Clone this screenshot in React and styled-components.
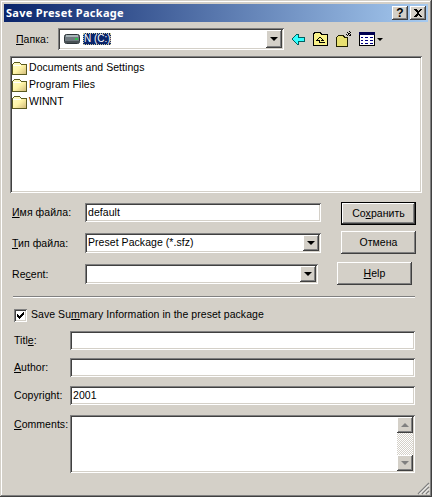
import React from "react";
import styled, { createGlobalStyle, css } from "styled-components";

const Global = createGlobalStyle`
  html, body { margin: 0; padding: 0; background: #d4d0c8; }
  * { box-sizing: border-box; }
`;

const sunken = css`
  background: #fff;
  box-shadow: inset 1px 1px 0 #808080, inset -1px -1px 0 #fff, inset 2px 2px 0 #404040, inset -2px -2px 0 #d4d0c8;
`;
const raised = css`
  background: #d4d0c8;
  box-shadow: inset -1px -1px 0 #404040, inset 1px 1px 0 #fff, inset -2px -2px 0 #808080;
`;

const Window = styled.div`
  position: relative;
  width: 432px;
  height: 497px;
  padding: 4px;
  background: #d4d0c8;
  box-shadow: inset -1px -1px 0 #404040, inset 1px 1px 0 #d4d0c8, inset -2px -2px 0 #808080, inset 2px 2px 0 #fff;
  font: 10.5px/13px "Liberation Sans", Arial, sans-serif;
  letter-spacing: 0.05px;
  color: #000;
  overflow: hidden;
`;
const TitleBar = styled.div`
  height: 18px;
  display: flex;
  align-items: center;
  padding: 0 2px;
  background: linear-gradient(to right, #0a246a, #a6caf0);
`;
const TitleText = styled.span`
  flex: 1;
  font: bold 11px/14px "Noto Sans", sans-serif;
  letter-spacing: 0.3px;
  color: #fff;
`;
const CaptionButton = styled.button`
  ${raised}
  width: 16px;
  height: 14px;
  margin: 0 0 0 2px;
  padding: 0;
  border: 0;
  display: flex;
  align-items: center;
  justify-content: center;
  font: bold 12px/12px "Liberation Sans", sans-serif;
  color: #000;
`;
const FolderRow = styled.div`
  display: flex;
  align-items: center;
  height: 22px;
  margin-top: 6px;
  padding-left: 12px;
`;
const FolderLabel = styled.span`
  width: 42px;
`;
const FolderCombo = styled.div`
  ${sunken}
  position: relative;
  width: 226px;
  height: 22px;
  display: flex;
  align-items: center;
  padding-left: 6px;
  gap: 3px;
`;
const Selected = styled.span`
  height: 12px;
  width: 28px;
  padding-left: 1px;
  font-size: 10px;
  line-height: 12px;
  letter-spacing: 0;
  background: #0a246a;
  color: #fff;
  outline: 1px dotted #c8c8a0;
  outline-offset: -1px;
  white-space: nowrap;
`;
const ComboButton = styled.span`
  ${raised}
  position: absolute;
  top: 2px;
  right: ${(p) => p.$right ?? 2}px;
  width: ${(p) => p.$w ?? 16}px;
  height: ${(p) => p.$h ?? 16}px;
  display: flex;
  align-items: center;
  justify-content: center;
  &::after {
    content: "";
    border-left: 4px solid transparent;
    border-right: 4px solid transparent;
    border-top: 4px solid #000;
  }
`;
const Toolbar = styled.div`
  display: flex;
  align-items: center;
  gap: 7px;
  margin-left: 7px;
`;
const MenuCaret = styled.span`
  width: 0;
  height: 0;
  margin-left: -5px;
  border-left: 3px solid transparent;
  border-right: 3px solid transparent;
  border-top: 3px solid #000;
`;
const FileList = styled.div`
  ${sunken}
  height: 137px;
  margin: 6px 6px 0;
  padding: 3px 2px;
`;
const FileRow = styled.div`
  height: 17px;
  display: flex;
  align-items: center;
  gap: 1px;
`;
const FileArea = styled.div`
  display: flex;
  margin-top: 9px;
  padding-left: 8px;
`;
const FileFields = styled.div`
  display: flex;
  flex-direction: column;
  gap: 11px;
  padding-top: 1px;
`;
const FieldLine = styled.div`
  display: flex;
  align-items: center;
`;
const FileLabel = styled.label`
  width: 73px;
`;
const Field = styled.div`
  ${sunken}
  position: relative;
  width: ${(p) => p.$w}px;
  height: ${(p) => p.$h ?? 19}px;
  padding: 3px 0 0 3px;
  line-height: 13px;
`;
const Buttons = styled.div`
  display: flex;
  flex-direction: column;
  margin-left: 20px;
`;
const PushButton = styled.button`
  ${raised}
  width: 75px;
  height: 23px;
  margin: ${(p) => p.$margin ?? 0};
  padding: 0;
  border: 0;
  font: inherit;
  letter-spacing: inherit;
  color: #000;
  ${(p) => p.$primary && css`
    box-shadow: inset 0 0 0 1px #000, inset -2px -2px 0 #404040, inset 2px 2px 0 #fff, inset -3px -3px 0 #808080;
  `}
`;
const Separator = styled.div`
  height: 2px;
  margin: 11px 13px 0 9px;
  background: #808080;
  border-bottom: 1px solid #fff;
`;
const CheckRow = styled.div`
  display: flex;
  align-items: center;
  gap: 4px;
  height: 13px;
  margin: 11px 0 0 10px;
`;
const CheckLabel = styled.span`
  padding-bottom: 2px;
`;
const CheckBox = styled.span`
  ${sunken}
  width: 13px;
  height: 13px;
  display: flex;
  align-items: center;
  justify-content: center;
`;
const MetaArea = styled.div`
  margin: 9px 13px 0 10px;
  display: flex;
  flex-direction: column;
`;
const MetaRow = styled.div`
  display: flex;
  align-items: ${(p) => (p.$top ? "flex-start" : "center")};
  margin-top: ${(p) => p.$gap ?? 0}px;
`;
const MetaLabel = styled.label`
  width: 56px;
  padding-top: ${(p) => (p.$top ? 3 : 0)}px;
`;
const ScrollBar = styled.div`
  position: absolute;
  top: 2px;
  right: 2px;
  bottom: 2px;
  width: 16px;
  display: flex;
  flex-direction: column;
  background: repeating-conic-gradient(#d4d0c8 0 25%, #fff 0 50%) 0 0 / 2px 2px;
`;
const ScrollButton = styled.span`
  ${raised}
  height: 16px;
  display: flex;
  align-items: center;
  justify-content: center;
  &::after {
    content: "";
    border-left: 4px solid transparent;
    border-right: 4px solid transparent;
    ${(p) => (p.$up ? "border-bottom: 4px solid #808080;" : "border-top: 4px solid #808080;")}
  }
`;
const Track = styled.span`
  flex: 1;
`;
const Grip = styled.svg`
  position: absolute;
  right: 2px;
  bottom: 2px;
`;

const Folder = () => (
  <svg width="16" height="14" viewBox="0 0 16 14">
    <defs>
      <linearGradient id="f" x1="0" y1="0" x2="1" y2="1">
        <stop offset="0" stopColor="#ffffcc" />
        <stop offset="0.5" stopColor="#fff5a8" />
        <stop offset="1" stopColor="#d0b878" />
      </linearGradient>
    </defs>
    <path d="M0.5 3.5 L2.5 1.5 H7.5 L9.5 3.5 H14.5 V13.5 H0.5 Z" fill="url(#f)" stroke="#5a5a20" shapeRendering="crispEdges" />
    <path d="M1 4.5 H9" stroke="#fff" />
  </svg>
);

const Drive = () => (
  <svg width="16" height="10" viewBox="0 0 16 10">
    <rect x="0.5" y="0.5" width="15" height="9" rx="2" fill="#707a80" stroke="#2c3438" />
    <rect x="2" y="1" width="12" height="2" fill="#a8b4b8" />
    <rect x="1" y="7" width="14" height="2" fill="#485054" />
    <rect x="11" y="4" width="3" height="2" fill="#30c050" />
  </svg>
);

const BackIcon = () => (
  <svg width="15" height="12" viewBox="0 0 15 12" shapeRendering="crispEdges">
    <path d="M1 6 L6 1 H7 V4 H13 V8 H7 V11 H6 Z" fill="#33ffff" stroke="#006060" />
  </svg>
);
const UpIcon = () => (
  <svg width="16" height="14" viewBox="0 0 16 14" shapeRendering="crispEdges">
    <path d="M0.5 2.5 L1.5 0.5 H7.5 L8.5 2.5 H14.5 V13.5 H0.5 Z" fill="#f8f088" stroke="#000" />
    <path d="M7 5 L4 8 H6.5 V10.5 H11.5 M7 5 L10 8 H7.5" fill="none" stroke="#000" />
  </svg>
);
const NewFolderIcon = () => (
  <svg width="16" height="16" viewBox="0 0 16 16" shapeRendering="crispEdges">
    <path d="M0.5 6.5 L2.5 4.5 H7.5 L8.5 6.5 H11.5 V15.5 H0.5 Z" fill="#e8e070" stroke="#202000" />
    <path d="M13 0V6M10 3H16M11 1L15 5M15 1L11 5" stroke="#000" strokeDasharray="1 1" />
  </svg>
);
const ViewsIcon = () => (
  <svg width="16" height="14" viewBox="0 0 16 14" shapeRendering="crispEdges">
    <rect x="0.5" y="0.5" width="15" height="13" fill="#fff" stroke="#000" />
    <rect x="0" y="0" width="16" height="3" fill="#000050" />
    <path d="M2 5h2M2 8h2M2 11h2M6 5h3M6 8h3M6 11h3M11 5h3M11 8h3M11 11h3" stroke="#000080" />
  </svg>
);
const CloseGlyph = () => (
  <svg width="10" height="8" viewBox="0 0 10 8" shapeRendering="crispEdges">
    <path d="M1 0h2l2 2 2-2h2L6 4l3 4H7L5 6 3 8H1l3-4z" fill="#000" />
  </svg>
);
const Check = () => (
  <svg width="9" height="9" viewBox="0 0 9 9" shapeRendering="crispEdges">
    <path d="M1 3v3l2 2 5-5V1L3 5z" fill="#000" />
  </svg>
);

export default function App() {
  return (
    <>
      <Global />
      <Window>
        <TitleBar>
          <TitleText>Save Preset Package</TitleText>
          <CaptionButton>?</CaptionButton>
          <CaptionButton><CloseGlyph /></CaptionButton>
        </TitleBar>

        <FolderRow>
          <FolderLabel><u>П</u>апка:</FolderLabel>
          <FolderCombo>
            <Drive />
            <Selected>N (C:)</Selected>
            <ComboButton $h={18} />
          </FolderCombo>
          <Toolbar>
            <BackIcon />
            <UpIcon />
            <NewFolderIcon />
            <ViewsIcon />
            <MenuCaret />
          </Toolbar>
        </FolderRow>

        <FileList>
          {["Documents and Settings", "Program Files", "WINNT"].map((name) => (
            <FileRow key={name}>
              <Folder />
              <span>{name}</span>
            </FileRow>
          ))}
        </FileList>

        <FileArea>
          <FileFields>
            <FieldLine>
              <FileLabel><u>И</u>мя файла:</FileLabel>
              <Field $w={236}>default</Field>
            </FieldLine>
            <FieldLine>
              <FileLabel><u>Т</u>ип файла:</FileLabel>
              <Field $w={236} $h={20}>
                Preset Package (*.sfz)
                <ComboButton />
              </Field>
            </FieldLine>
            <FieldLine>
              <FileLabel>Re<u>c</u>ent:</FileLabel>
              <Field $w={233} $h={20}>
                <ComboButton />
              </Field>
            </FieldLine>
          </FileFields>
          <Buttons>
            <PushButton $primary>Со<u>х</u>ранить</PushButton>
            <PushButton $margin="6px 0 0 0">Отмена</PushButton>
            <PushButton $margin="8px 0 0 -4px"><u>H</u>elp</PushButton>
          </Buttons>
        </FileArea>

        <Separator />

        <CheckRow>
          <CheckBox><Check /></CheckBox>
          <CheckLabel>Save Su<u>m</u>mary Information in the preset package</CheckLabel>
        </CheckRow>

        <MetaArea>
          <MetaRow>
            <MetaLabel>Titl<u>e</u>:</MetaLabel>
            <Field $w={345} />
          </MetaRow>
          <MetaRow $gap={8}>
            <MetaLabel><u>A</u>uthor:</MetaLabel>
            <Field $w={345} />
          </MetaRow>
          <MetaRow $gap={9}>
            <MetaLabel>Copyright:</MetaLabel>
            <Field $w={345}>2001</Field>
          </MetaRow>
          <MetaRow $gap={10} $top>
            <MetaLabel $top><u>C</u>omments:</MetaLabel>
            <Field $w={345} $h={58}>
              <ScrollBar>
                <ScrollButton $up />
                <Track />
                <ScrollButton />
              </ScrollBar>
            </Field>
          </MetaRow>
        </MetaArea>

        <Grip width="13" height="13" viewBox="0 0 13 13">
          <path d="M12 1 L1 12 M12 5 L5 12 M12 9 L9 12" stroke="#808080" strokeWidth="1.4" />
          <path d="M12 2.5 L2.5 12 M12 6.5 L6.5 12 M12 10.5 L10.5 12" stroke="#fff" strokeWidth="1" />
        </Grip>
      </Window>
    </>
  );
}
